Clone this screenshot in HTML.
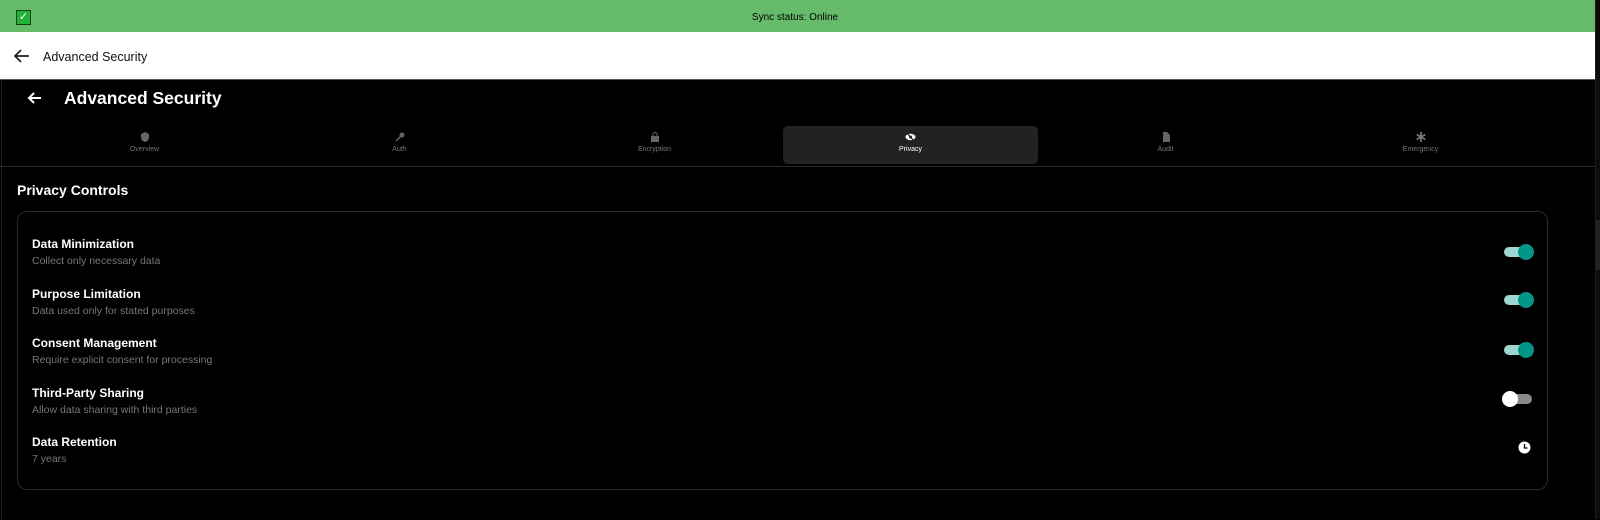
<!DOCTYPE html>
<html><head><style>
*{margin:0;padding:0;box-sizing:border-box}
body{width:1600px;height:519px;background:#000;font-family:"Liberation Sans",sans-serif;position:relative;overflow:hidden}
.abs{position:absolute}
.tab{position:absolute;top:126px;width:255px;height:38px;text-align:center;color:#777;font-size:7px}
.tab svg{display:block;margin:6px auto 4px}
.row{position:absolute;left:32px}
.t{color:#fff;font-size:12px;font-weight:bold}
.s{color:#777;font-size:10.5px;margin-top:4px}
.tg{position:absolute;left:1504px;width:28px;height:10px;border-radius:5px;background:#9fd6cf}
.tg::after{content:"";position:absolute;right:-2px;top:-3px;width:16px;height:16px;border-radius:50%;background:#009688}
.off{background:#8a8a8a}
.off::after{left:-2px;right:auto;background:#fff}
</style></head><body>
<div class="abs" style="left:0;top:0;width:1595px;height:32px;background:#66bb6a"></div>
<div class="abs" style="left:16px;top:10px;width:15px;height:15px;background:#22b33a;border:1px solid #114411;color:#fff;font-size:11px;line-height:13px;text-align:center">✓</div>
<div class="abs" style="left:0;top:12px;width:1590px;text-align:center;font-size:10px;color:#000">Sync status: Online</div>
<div class="abs" style="left:0;top:32px;width:1595px;height:47px;background:#fff"></div>
<svg class="abs" style="left:14px;top:49px" width="16" height="14" viewBox="0 0 16 14"><path d="M15 7H2M7 1L1 7l6 6" stroke="#222" stroke-width="1.8" fill="none"/></svg>
<div class="abs" style="left:43px;top:50px;font-size:12.5px;color:#111">Advanced Security</div>
<div class="abs" style="left:0;top:79px;width:1595px;height:1px;background:#555"></div>
<div class="abs" style="left:1px;top:80px;width:1px;height:440px;background:#222"></div>
<div class="abs" style="left:1595px;top:0;width:5px;height:519px;background:#0c0c0c;border-left:1px solid #1e1e1e"></div>
<div class="abs" style="left:1596px;top:220px;width:4px;height:50px;background:#222"></div>
<svg class="abs" style="left:27px;top:91px" width="15" height="14" viewBox="0 0 15 14"><path d="M14 7H2M7 2L2 7l5 5" stroke="#fff" stroke-width="2" fill="none"/></svg>
<div class="abs" style="left:64px;top:88px;font-size:17.5px;font-weight:bold;color:#fff">Advanced Security</div>
<div class="abs" style="left:783px;top:126px;width:255px;height:38px;background:#222;border-radius:5px"></div>
<div class="tab" style="left:17px"><svg width="10" height="10" viewBox="0 0 10 10"><path d="M5 0L9 2v3c0 3-2 4.5-4 5C3 9.5 1 8 1 5V2z" fill="#666"/></svg>Overview</div>
<div class="tab" style="left:272px"><svg width="10" height="10" viewBox="0 0 10 10"><circle cx="7" cy="3" r="2.5" fill="#666"/><path d="M6 4L1 9" stroke="#666" stroke-width="1.5"/></svg>Auth</div>
<div class="tab" style="left:527px"><svg width="10" height="10" viewBox="0 0 10 10"><rect x="1" y="4" width="8" height="6" fill="#666"/><path d="M3 4V2.5a2 2 0 014 0V4" stroke="#666" fill="none"/></svg>Encryption</div>
<div class="tab" style="left:783px;color:#fff"><svg width="11" height="10" viewBox="0 0 11 10"><ellipse cx="5.5" cy="5" rx="5" ry="3.2" fill="#fff"/><circle cx="5.5" cy="5" r="1.5" fill="#222"/><path d="M2 1l7 8" stroke="#222" stroke-width="1.2"/></svg>Privacy</div>
<div class="tab" style="left:1038px"><svg width="10" height="10" viewBox="0 0 10 10"><path d="M2 0h4l3 3v7H2z" fill="#666"/></svg>Audit</div>
<div class="tab" style="left:1293px"><svg width="10" height="10" viewBox="0 0 10 10"><path d="M5 0v10M0.7 2.5l8.6 5M0.7 7.5l8.6-5" stroke="#777" stroke-width="1.8"/></svg>Emergency</div>
<div class="abs" style="left:0;top:166px;width:1595px;height:1px;background:#2a2a2a"></div>
<div class="abs" style="left:17px;top:182px;font-size:14px;font-weight:bold;color:#fff">Privacy Controls</div>
<div class="abs" style="left:17px;top:211px;width:1531px;height:279px;border:1px solid #2a2a2a;border-radius:10px"></div>
<div class="row" style="top:237px"><div class="t">Data Minimization</div><div class="s">Collect only necessary data</div></div>
<div class="row" style="top:287px"><div class="t">Purpose Limitation</div><div class="s">Data used only for stated purposes</div></div>
<div class="row" style="top:336px"><div class="t">Consent Management</div><div class="s">Require explicit consent for processing</div></div>
<div class="row" style="top:386px"><div class="t">Third-Party Sharing</div><div class="s">Allow data sharing with third parties</div></div>
<div class="row" style="top:435px"><div class="t">Data Retention</div><div class="s">7 years</div></div>
<div class="tg" style="top:247px"></div>
<div class="tg" style="top:295px"></div>
<div class="tg" style="top:345px"></div>
<div class="tg off" style="top:394px"></div>
<svg class="abs" style="left:1518px;top:441px" width="13" height="13" viewBox="0 0 13 13"><circle cx="6.5" cy="6.5" r="6" fill="#fff"/><path d="M6.5 3v4h3" stroke="#000" stroke-width="1.3" fill="none"/></svg>
</body></html>
